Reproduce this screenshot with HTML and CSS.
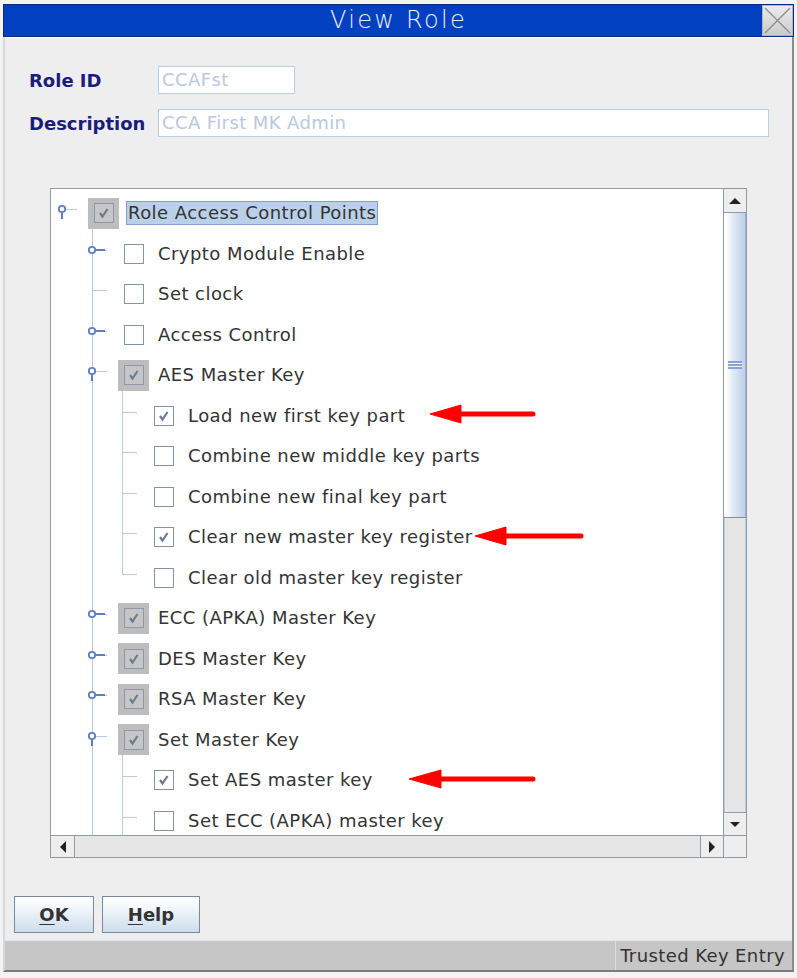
FILE: index.html
```html
<!DOCTYPE html>
<html>
<head>
<meta charset="utf-8">
<title>View Role</title>
<link rel="stylesheet" href="styles.css">
</head>
<body>
<div class="window">
  <div class="titlebar">
    <span class="title">View Role</span>
    <span class="close"><svg width="29" height="29" viewBox="0 0 29 29"><path d="M2 2 L27 27 M27 2 L2 27" stroke="#8a8a8a" stroke-width="1.2" fill="none"/></svg></span>
  </div>
  <div class="frame">
    <div class="content">
      <div class="field"><label>Role ID</label><div class="input short">CCAFst</div></div>
      <div class="field"><label>Description</label><div class="input long">CCA First MK Admin</div></div>

      <div class="pane">
        <div class="viewport">
          <div class="tree">
            <div class="row">
              <span class="handle root"><svg class="icon" width="24" height="20" viewBox="0 0 24 20"><circle cx="10" cy="10" r="3.2" fill="#fff" stroke="#5d7fbf" stroke-width="1.8"/><path d="M10 13 V20" stroke="#5d7fbf" stroke-width="2"/></svg><span class="kids"></span></span>
              <span class="slot gray"><span class="box"><svg width="18" height="18" viewBox="0 0 18 18"><path d="M5 9 L7.5 12.5 L12.5 5" stroke="#6a7c93" stroke-width="2.2" fill="none"/></svg></span></span>
              <span class="label selected">Role Access Control Points</span>
            </div>
            <div class="row">
              <span class="col"></span>
              <span class="handle mid"><svg class="icon" width="24" height="20" viewBox="0 0 24 20"><circle cx="10" cy="10" r="3.2" fill="#fff" stroke="#5d7fbf" stroke-width="1.8"/><path d="M13 10 H23" stroke="#5d7fbf" stroke-width="2"/></svg></span>
              <span class="slot"><span class="box"></span></span>
              <span class="label">Crypto Module Enable</span>
            </div>
            <div class="row">
              <span class="col"></span>
              <span class="handle mid"></span>
              <span class="slot"><span class="box"></span></span>
              <span class="label">Set clock</span>
            </div>
            <div class="row">
              <span class="col"></span>
              <span class="handle mid"><svg class="icon" width="24" height="20" viewBox="0 0 24 20"><circle cx="10" cy="10" r="3.2" fill="#fff" stroke="#5d7fbf" stroke-width="1.8"/><path d="M13 10 H23" stroke="#5d7fbf" stroke-width="2"/></svg></span>
              <span class="slot"><span class="box"></span></span>
              <span class="label">Access Control</span>
            </div>
            <div class="row">
              <span class="col"></span>
              <span class="handle mid"><svg class="icon" width="24" height="20" viewBox="0 0 24 20"><circle cx="10" cy="10" r="3.2" fill="#fff" stroke="#5d7fbf" stroke-width="1.8"/><path d="M10 13 V20" stroke="#5d7fbf" stroke-width="2"/></svg><span class="kids"></span></span>
              <span class="slot gray"><span class="box"><svg width="18" height="18" viewBox="0 0 18 18"><path d="M5 9 L7.5 12.5 L12.5 5" stroke="#6a7c93" stroke-width="2.2" fill="none"/></svg></span></span>
              <span class="label">AES Master Key</span>
            </div>
            <div class="row">
              <span class="col"></span><span class="col line"></span>
              <span class="handle mid"></span>
              <span class="slot"><span class="box"><svg width="18" height="18" viewBox="0 0 18 18"><path d="M5 9 L7.5 12.5 L12.5 5" stroke="#6a7c93" stroke-width="2.2" fill="none"/></svg></span></span>
              <span class="label">Load new first key part</span>
            </div>
            <div class="row">
              <span class="col"></span><span class="col line"></span>
              <span class="handle mid"></span>
              <span class="slot"><span class="box"></span></span>
              <span class="label">Combine new middle key parts</span>
            </div>
            <div class="row">
              <span class="col"></span><span class="col line"></span>
              <span class="handle mid"></span>
              <span class="slot"><span class="box"></span></span>
              <span class="label">Combine new final key part</span>
            </div>
            <div class="row">
              <span class="col"></span><span class="col line"></span>
              <span class="handle mid"></span>
              <span class="slot"><span class="box"><svg width="18" height="18" viewBox="0 0 18 18"><path d="M5 9 L7.5 12.5 L12.5 5" stroke="#6a7c93" stroke-width="2.2" fill="none"/></svg></span></span>
              <span class="label">Clear new master key register</span>
            </div>
            <div class="row">
              <span class="col"></span><span class="col line"></span>
              <span class="handle end"></span>
              <span class="slot"><span class="box"></span></span>
              <span class="label">Clear old master key register</span>
            </div>
            <div class="row">
              <span class="col"></span>
              <span class="handle mid"><svg class="icon" width="24" height="20" viewBox="0 0 24 20"><circle cx="10" cy="10" r="3.2" fill="#fff" stroke="#5d7fbf" stroke-width="1.8"/><path d="M13 10 H23" stroke="#5d7fbf" stroke-width="2"/></svg></span>
              <span class="slot gray"><span class="box"><svg width="18" height="18" viewBox="0 0 18 18"><path d="M5 9 L7.5 12.5 L12.5 5" stroke="#6a7c93" stroke-width="2.2" fill="none"/></svg></span></span>
              <span class="label">ECC (APKA) Master Key</span>
            </div>
            <div class="row">
              <span class="col"></span>
              <span class="handle mid"><svg class="icon" width="24" height="20" viewBox="0 0 24 20"><circle cx="10" cy="10" r="3.2" fill="#fff" stroke="#5d7fbf" stroke-width="1.8"/><path d="M13 10 H23" stroke="#5d7fbf" stroke-width="2"/></svg></span>
              <span class="slot gray"><span class="box"><svg width="18" height="18" viewBox="0 0 18 18"><path d="M5 9 L7.5 12.5 L12.5 5" stroke="#6a7c93" stroke-width="2.2" fill="none"/></svg></span></span>
              <span class="label">DES Master Key</span>
            </div>
            <div class="row">
              <span class="col"></span>
              <span class="handle mid"><svg class="icon" width="24" height="20" viewBox="0 0 24 20"><circle cx="10" cy="10" r="3.2" fill="#fff" stroke="#5d7fbf" stroke-width="1.8"/><path d="M13 10 H23" stroke="#5d7fbf" stroke-width="2"/></svg></span>
              <span class="slot gray"><span class="box"><svg width="18" height="18" viewBox="0 0 18 18"><path d="M5 9 L7.5 12.5 L12.5 5" stroke="#6a7c93" stroke-width="2.2" fill="none"/></svg></span></span>
              <span class="label">RSA Master Key</span>
            </div>
            <div class="row">
              <span class="col"></span>
              <span class="handle mid"><svg class="icon" width="24" height="20" viewBox="0 0 24 20"><circle cx="10" cy="10" r="3.2" fill="#fff" stroke="#5d7fbf" stroke-width="1.8"/><path d="M10 13 V20" stroke="#5d7fbf" stroke-width="2"/></svg><span class="kids"></span></span>
              <span class="slot gray"><span class="box"><svg width="18" height="18" viewBox="0 0 18 18"><path d="M5 9 L7.5 12.5 L12.5 5" stroke="#6a7c93" stroke-width="2.2" fill="none"/></svg></span></span>
              <span class="label">Set Master Key</span>
            </div>
            <div class="row">
              <span class="col"></span><span class="col line"></span>
              <span class="handle mid"></span>
              <span class="slot"><span class="box"><svg width="18" height="18" viewBox="0 0 18 18"><path d="M5 9 L7.5 12.5 L12.5 5" stroke="#6a7c93" stroke-width="2.2" fill="none"/></svg></span></span>
              <span class="label">Set AES master key</span>
            </div>
            <div class="row">
              <span class="col"></span><span class="col line"></span>
              <span class="handle mid"></span>
              <span class="slot"><span class="box"></span></span>
              <span class="label">Set ECC (APKA) master key</span>
            </div>
          </div>
          <svg class="arrows" width="672" height="646" viewBox="0 0 672 646">
            <g fill="#ff0000" stroke="#ff0000">
              <path d="M379 225 L410 216 L410 234 Z" stroke-width="1"/>
              <path d="M408 225 H482" stroke-width="5" stroke-linecap="round"/>
              <path d="M424 347 L455 338 L455 356 Z" stroke-width="1"/>
              <path d="M453 347 H530" stroke-width="5" stroke-linecap="round"/>
              <path d="M358 590 L390 581 L390 599 Z" stroke-width="1"/>
              <path d="M388 590 H482" stroke-width="5" stroke-linecap="round"/>
            </g>
          </svg>
        </div>
        <div class="vscroll">
          <div class="sbtn up"><svg width="12" height="6" viewBox="0 0 12 6"><path d="M0 6 L6 0 L12 6 Z" fill="#222"/></svg></div>
          <div class="thumb"><span class="grip"></span></div>
          <div class="track"></div>
          <div class="sbtn down"><svg width="10" height="5" viewBox="0 0 10 5"><path d="M0 0 L10 0 L5 5 Z" fill="#222"/></svg></div>
        </div>
        <div class="hscroll">
          <div class="sbtn left"><svg width="6" height="12" viewBox="0 0 6 12"><path d="M6 0 L6 12 L0 6 Z" fill="#222"/></svg></div>
          <div class="htrack"></div>
          <div class="sbtn right"><svg width="6" height="12" viewBox="0 0 6 12"><path d="M0 0 L6 6 L0 12 Z" fill="#222"/></svg></div>
        </div>
        <div class="corner"></div>
      </div>

      <div class="buttons">
        <button class="btn ok"><u>O</u>K</button>
        <button class="btn help"><u>H</u>elp</button>
      </div>
    </div>
    <div class="statusbar">
      <span class="status-text">Trusted Key Entry</span>
    </div>
  </div>
</div>
</body>
</html>
```

FILE: styles.css
```css
html, body {
  margin: 0;
  padding: 0;
}
body {
  background: #f3f3f3;
  font-family: "DejaVu Sans", "Liberation Sans", sans-serif;
  color: #333333;
}
.window {
  width: 791px;
  margin: 4px 0 0 3px;
}
.titlebar {
  height: 33px;
  box-sizing: border-box;
  background: #0040c1;
  border: 1px solid #0b2a82;
  display: grid;
  grid-template-columns: 31px 1fr 31px;
  align-items: center;
}
.title {
  grid-column: 2;
  text-align: center;
  color: #eef0fb;
  font-size: 24px;
  font-weight: 200;
  letter-spacing: 2.3px;
  line-height: 31px;
}
.close {
  grid-column: 3;
  width: 31px;
  height: 31px;
  box-sizing: border-box;
  border: 1px solid #b4b4b4;
  background: linear-gradient(to bottom, #ececec, #cacaca);
  display: flex;
  align-items: center;
  justify-content: center;
}
.close svg { display: block; }
.frame {
  border-left: 2px solid #d8d8d8;
  border-right: 2px solid #8c8c8c;
  border-bottom: 2px solid #7a7a7a;
  background: #eeeeee;
}
.content {
  height: 903px;
  box-sizing: border-box;
  padding-top: 28px;
  border-top: 1px solid #fafafa;
}
.field {
  display: flex;
  align-items: center;
  height: 28px;
  margin-left: 24px;
}
.field + .field { margin-top: 15px; }
.field label {
  width: 129px;
  flex: none;
  font-weight: bold;
  font-size: 18px;
  color: #1c1c7c;
}
.input {
  height: 28px;
  box-sizing: border-box;
  border: 1px solid #b8cfe5;
  background: #ffffff;
  color: #b8c9dd;
  font-size: 18px;
  letter-spacing: 0.4px;
  line-height: 26px;
  padding-left: 3px;
}
.input.short { width: 137px; }
.input.long { width: 611px; }

.pane {
  margin: 51px 0 0 45px;
  width: 697px;
  height: 670px;
  box-sizing: border-box;
  border: 1px solid #909ba7;
  background: #ffffff;
  display: grid;
  grid-template-columns: 672px 23px;
  grid-template-rows: 646px 22px;
}
.viewport {
  position: relative;
  overflow: hidden;
  padding-top: 4px;
  box-sizing: border-box;
}
.row {
  display: flex;
  align-items: center;
  height: 40.5px;
}
.col, .handle {
  position: relative;
  width: 30px;
  height: 100%;
  flex: none;
}
.col.line::before,
.handle.mid::before,
.handle.end::before {
  content: "";
  position: absolute;
  left: 11px;
  top: 0;
  bottom: 0;
  border-left: 1px solid #b3cbe6;
}
.handle.end::before { bottom: auto; height: 17px; }
.handle::after {
  content: "";
  position: absolute;
  left: 11px;
  width: 15px;
  top: 16px;
  border-top: 1px solid #b3cbe6;
}
.icon {
  position: absolute;
  left: 1px;
  top: 6px;
  z-index: 1;
}
.kids {
  position: absolute;
  left: 41px;
  top: 29px;
  bottom: 0;
  border-left: 1px solid #b3cbe6;
}
.slot {
  position: relative;
  z-index: 2;
  width: 31px;
  height: 31px;
  margin-left: 7px;
  flex: none;
  display: flex;
  align-items: center;
  justify-content: center;
}
.slot.gray { background: #bdbdbd; }
.box {
  width: 20px;
  height: 20px;
  box-sizing: border-box;
  border: 1px solid #8494a8;
  background: #ffffff;
  display: flex;
  align-items: center;
  justify-content: center;
}
.slot.gray .box { background: #c6c6c6; border-color: #8a98aa; }
.box svg { display: block; }
.label {
  margin-left: 7px;
  border: 1px solid transparent;
  padding: 0 1px;
  font-size: 18px;
  letter-spacing: 0.45px;
  line-height: 22px;
  color: #333333;
  white-space: nowrap;
}
.label.selected {
  background: #bad0e9;
  border-color: #7f9fcf;
}
.arrows {
  position: absolute;
  left: 0;
  top: 0;
  z-index: 3;
}

.vscroll {
  display: flex;
  flex-direction: column;
  border-left: 1px solid #909ba7;
  background: #e6e6e6;
}
.sbtn {
  display: flex;
  align-items: center;
  justify-content: center;
  background: #eeeeee;
  flex: none;
}
.sbtn svg { display: block; }
.sbtn.up { height: 23px; border-bottom: 1px solid #909ba7; }
.thumb {
  height: 305px;
  box-sizing: border-box;
  background: linear-gradient(to right, #ffffff 10%, #dfe9f5 45%, #bdd1e9 100%);
  border-right: 1px solid #9ab0cc;
  border-bottom: 1px solid #8a8a8a;
  display: flex;
  align-items: center;
  justify-content: center;
  flex: none;
}
.grip {
  width: 14px;
  height: 8px;
  background: repeating-linear-gradient(to bottom, #8aa3d4 0, #8aa3d4 1.5px, #f4f7fc 1.5px, #f4f7fc 3px);
}
.track {
  flex: 1;
  border-left: 1px solid #b8cfe5;
  border-right: 1px solid #b8cfe5;
}
.sbtn.down { height: 22px; border-top: 1px solid #909ba7; }
.hscroll {
  display: flex;
  border-top: 1px solid #909ba7;
  background: #e6e6e6;
}
.sbtn.left { width: 23px; border-right: 1px solid #909ba7; }
.htrack { flex: 1; }
.sbtn.right { width: 22px; border-left: 1px solid #909ba7; }
.corner {
  background: #eeeeee;
  border-top: 1px solid #909ba7;
  border-left: 1px solid #909ba7;
}

.buttons {
  display: flex;
  gap: 8px;
  margin: 38px 0 0 9px;
}
.btn {
  height: 37px;
  box-sizing: border-box;
  border: 1px solid #7a8a99;
  background: linear-gradient(to bottom, #ffffff 0%, #f0f5fa 35%, #cddcec 100%);
  font-family: "DejaVu Sans", sans-serif;
  font-weight: bold;
  font-size: 18px;
  color: #333333;
  padding: 0;
  margin: 0;
}
.btn.ok { width: 80px; }
.btn.help { width: 98px; }
.btn u { text-decoration-thickness: 1px; text-underline-offset: 3px; }

.statusbar {
  height: 30px;
  box-sizing: border-box;
  background: #c6c6c6;
  border-top: 1px solid #dfe6ee;
  display: flex;
  justify-content: flex-end;
}
.status-text {
  border-left: 1px solid #dcdcdc;
  padding: 0 7px 0 4px;
  font-size: 18px;
  letter-spacing: 0.4px;
  line-height: 29px;
  color: #333333;
}
```
